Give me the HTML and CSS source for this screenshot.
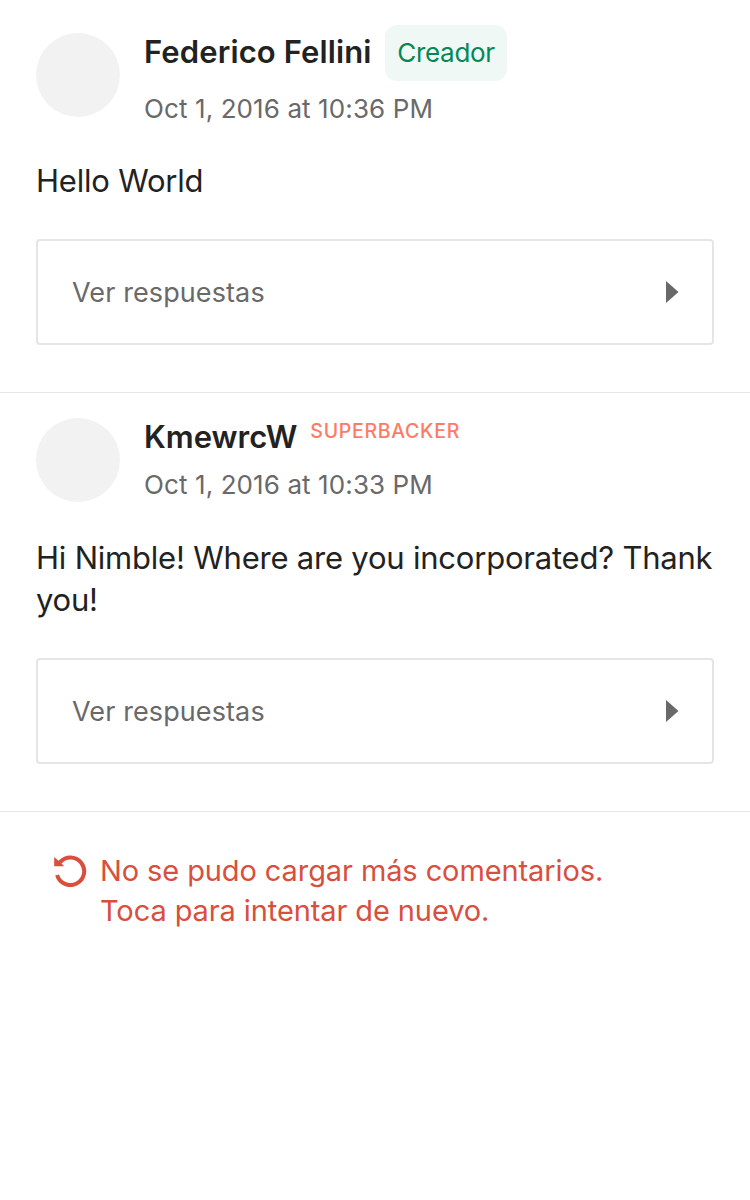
FILE: index.html
```html
<!DOCTYPE html>
<html lang="es">
<head>
<meta charset="utf-8">
<title>Comentarios</title>
<link rel="stylesheet" href="styles.css">
</head>
<body>
<main class="comments">
  <article class="comment comment-creator">
    <header class="author">
      <div class="avatar"></div>
      <div class="meta">
        <div class="name-row"><h2 class="name">Federico Fellini</h2><span class="badge">Creador</span></div>
        <time class="date">Oct 1, 2016 at 10:36 PM</time>
      </div>
    </header>
    <p class="body">Hello World</p>
    <button class="replies">Ver respuestas<svg class="arrow" viewBox="0 0 13 22"><path d="M0 0 12.5 11 0 22Z"/></svg></button>
  </article>
  <article class="comment comment-backer">
    <header class="author">
      <div class="avatar"></div>
      <div class="meta">
        <div class="name-row"><h2 class="name">KmewrcW</h2><span class="superbacker">SUPERBACKER</span></div>
        <time class="date">Oct 1, 2016 at 10:33 PM</time>
      </div>
    </header>
    <p class="body">Hi Nimble! Where are you incorporated? Thank you!</p>
    <button class="replies">Ver respuestas<svg class="arrow" viewBox="0 0 13 22"><path d="M0 0 12.5 11 0 22Z"/></svg></button>
  </article>
  <button class="retry">
    <svg class="retry-icon" viewBox="0 0 34 34"><path class="ring" d="M6.8 9.4A13.8 13.8 0 1 1 4.1 22"/><path class="head" d="M1.2 4v9.2h10l-3.2-3.2z"/></svg>
    <span class="retry-text">No se pudo cargar más comentarios.<br>Toca para intentar de nuevo.</span>
  </button>
</main>
</body>
</html>
```
FILE: styles.css
```css
* { box-sizing: border-box; }
body { margin: 0; background: #fff; color: #222; font-family: Inter, sans-serif; }
h2, p { margin: 0; }
button { font: inherit; color: inherit; background: none; border: 0; padding: 0; text-align: left; }
.comment { padding: 25px 36px 0; border-bottom: 1px solid #e5e5e5; }
.comment-creator { height: 393px; }
.comment-backer { height: 419px; }
.author { display: flex; gap: 24px; }
.avatar { width: 84px; height: 84px; border-radius: 50%; background: #f2f2f2; flex: none; }
.comment-creator .avatar { margin-top: 8px; }
.name-row { display: flex; white-space: nowrap; }
.name { font-size: 31px; line-height: 38px; font-weight: 600; }
.comment-creator .name { width: 227px; padding-bottom: 2px; letter-spacing: 0.12px; }
.comment-creator .name-row { height: 56px; gap: 14px; align-items: center; }
.comment-backer .name-row { height: 39px; gap: 13px; }
.badge { height: 56px; width: 122px; border-radius: 12px; background: #eff8f5; color: #028858; font-size: 26px; line-height: 56px; text-align: center; letter-spacing: -0.3px; }
.superbacker { font-size: 19.5px; line-height: 26px; font-weight: 550; color: #ff7a66; letter-spacing: 0.7px; }
.date { display: block; color: #696969; font-size: 26px; line-height: 32px; margin-top: 12px; letter-spacing: 0.1px; white-space: nowrap; }
.body { font-size: 31px; line-height: 42px; letter-spacing: -0.21px; margin-top: 35px; }
.comment-backer .body { width: 684px; }
.replies { display: flex; align-items: center; justify-content: space-between; width: 678px; height: 106px; border: 2px solid #e5e5e5; border-radius: 4px; padding: 0 33px 0 34px; color: #696969; font-size: 27px; letter-spacing: 0.1px; margin-top: 37px; }
.arrow { width: 13px; height: 22px; fill: #696969; }
.retry { display: flex; gap: 13px; padding: 39px 53px; color: #d8503d; font-size: 29px; line-height: 40px; letter-spacing: -0.1px; white-space: nowrap; }
.retry-icon { width: 34px; height: 34px; margin-top: 2px; flex: none; }
.ring { fill: none; stroke: #d8503d; stroke-width: 4; }
.head { fill: #d8503d; }
```
